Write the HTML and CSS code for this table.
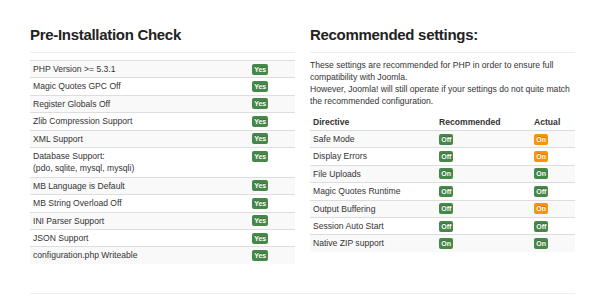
FILE: index.html
```html
<!DOCTYPE html>
<html>
<head>
<meta charset="utf-8">
<link rel="stylesheet" href="styles.css">
</head>
<body>
<div class="page">
  <div class="cols">
    <section class="col">
      <h3 class="title">Pre-Installation Check</h3>
      <hr class="rule">
      <table class="tbl tbl-check">
        <tbody>
          <tr><td>PHP Version &gt;= 5.3.1</td><td><span class="label ok">Yes</span></td></tr>
          <tr><td>Magic Quotes GPC Off</td><td><span class="label ok">Yes</span></td></tr>
          <tr><td>Register Globals Off</td><td><span class="label ok">Yes</span></td></tr>
          <tr><td>Zlib Compression Support</td><td><span class="label ok">Yes</span></td></tr>
          <tr><td>XML Support</td><td><span class="label ok">Yes</span></td></tr>
          <tr><td>Database Support:<br>(pdo, sqlite, mysql, mysqli)</td><td><span class="label ok">Yes</span></td></tr>
          <tr><td>MB Language is Default</td><td><span class="label ok">Yes</span></td></tr>
          <tr><td>MB String Overload Off</td><td><span class="label ok">Yes</span></td></tr>
          <tr><td>INI Parser Support</td><td><span class="label ok">Yes</span></td></tr>
          <tr><td>JSON Support</td><td><span class="label ok">Yes</span></td></tr>
          <tr><td>configuration.php Writeable</td><td><span class="label ok">Yes</span></td></tr>
        </tbody>
      </table>
    </section>
    <section class="col">
      <h3 class="title">Recommended settings:</h3>
      <hr class="rule">
      <p class="intro">These settings are recommended for PHP in order to ensure full<br>compatibility with Joomla.<br>However, Joomla! will still operate if your settings do not quite match<br>the recommended configuration.</p>
      <table class="tbl tbl-rec">
        <thead>
          <tr><th>Directive</th><th>Recommended</th><th>Actual</th></tr>
        </thead>
        <tbody>
          <tr><td>Safe Mode</td><td><span class="label ok">Off</span></td><td><span class="label warn">On</span></td></tr>
          <tr><td>Display Errors</td><td><span class="label ok">Off</span></td><td><span class="label warn">On</span></td></tr>
          <tr><td>File Uploads</td><td><span class="label ok">On</span></td><td><span class="label ok">On</span></td></tr>
          <tr><td>Magic Quotes Runtime</td><td><span class="label ok">Off</span></td><td><span class="label ok">Off</span></td></tr>
          <tr><td>Output Buffering</td><td><span class="label ok">Off</span></td><td><span class="label warn">On</span></td></tr>
          <tr><td>Session Auto Start</td><td><span class="label ok">Off</span></td><td><span class="label ok">Off</span></td></tr>
          <tr><td>Native ZIP support</td><td><span class="label ok">On</span></td><td><span class="label ok">On</span></td></tr>
        </tbody>
      </table>
    </section>
  </div>
  <hr class="rule bottom">
</div>
</body>
</html>
```
FILE: styles.css
```css
html, body {
  margin: 0;
  padding: 0;
  background: #fff;
}
body {
  font-family: "Liberation Sans", Arial, sans-serif;
  font-size: 8.6px;
  color: #333;
}
.page {
  width: 545px;
  padding: 26px 0 0 30px;
}
.cols {
  display: flex;
  gap: 15px;
  align-items: flex-start;
}
.col {
  width: 265px;
}
.title {
  margin: 0;
  font-size: 15px;
  line-height: 18px;
  font-weight: bold;
  letter-spacing: -0.3px;
  color: #222;
}
.rule {
  border: 0;
  border-top: 1px solid #eee;
  margin: 8px 0 7px 0;
  height: 0;
}
.rule.bottom {
  margin: 29px 0 0 0;
}
.intro {
  margin: 0 0 6px 0;
  line-height: 11.9px;
}
.tbl {
  width: 265px;
  border-collapse: collapse;
  border-spacing: 0;
}
.tbl-check {
  margin-top: 1px;
}
.tbl td, .tbl th {
  padding: 2px 3px;
  line-height: 12.4px;
  text-align: left;
  vertical-align: top;
  border-top: 1px solid #ddd;
}
.tbl th {
  font-weight: bold;
  border-top: 0;
  color: #333;
}
.tbl tbody tr:nth-child(odd) td {
  background: #f9f9f9;
}
.tbl-check td:first-child {
  width: 213px;
}
.tbl-rec th:nth-child(1) {
  width: 120px;
}
.tbl-rec th:nth-child(2) {
  width: 89px;
}
.label {
  display: inline-block;
  vertical-align: top;
  margin-top: 0.5px;
  padding: 0 2.2px;
  height: 11px;
  line-height: 11px;
  font-size: 7px;
  font-weight: bold;
  color: #fff;
  border-radius: 2px;
  text-shadow: 0 -1px 0 rgba(0, 0, 0, 0.25);
}
.label.ok {
  background: #468847;
}
.label.warn {
  background: #f89406;
}
```
